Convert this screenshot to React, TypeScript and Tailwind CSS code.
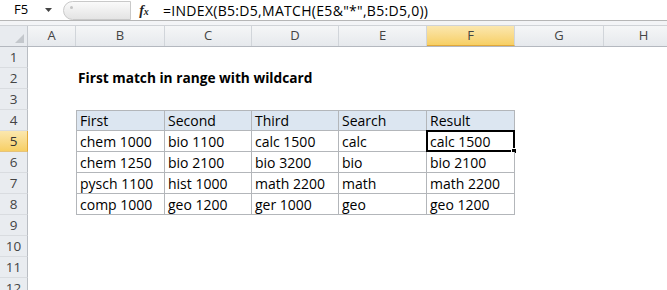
import React from 'react'

const cols = ['A', 'B', 'C', 'D', 'E', 'F', 'G', 'H']
const colW = ['w-[48px]', 'w-[89px]', 'w-[87px]', 'w-[87px]', 'w-[88px]', 'w-[88px]', 'w-[89px]', 'w-[80px]']

const table = [
  ['First', 'Second', 'Third', 'Search', 'Result'],
  ['chem 1000', 'bio 1100', 'calc 1500', 'calc', 'calc 1500'],
  ['chem 1250', 'bio 2100', 'bio 3200', 'bio', 'bio 2100'],
  ['pysch 1100', 'hist 1000', 'math 2200', 'math', 'math 2200'],
  ['comp 1000', 'geo 1200', 'ger 1000', 'geo', 'geo 1200'],
]

const font = { fontFamily: '"Open Sans", "Noto Sans", sans-serif' }

function FormulaBar() {
  return (
    <div className="flex items-center h-[21px] bg-white border-b border-[#b6b6b6]">
      {/* Name box */}
      <div className="flex items-center w-[60px] h-full pl-[14px] text-[13px] text-black">
        <span>F5</span>
        <svg className="ml-auto mr-[8px]" width="7" height="4" viewBox="0 0 7 4">
          <path d="M0 0h7L3.5 4z" fill="#444" />
        </svg>
      </div>
      {/* splitter */}
      <div className="relative ml-[3px] h-[19px] w-[68px] rounded-l-full border border-[#c9c9c9] bg-gradient-to-b from-[#fafafa] to-[#e4e4e4]">
        <div className="absolute left-[6px] top-[4px] w-[3px] h-[3px] rounded-full bg-[#c4c4c4]" />
      </div>
      <div className="w-[26px] flex justify-center text-[14px] text-[#222] italic" style={{ fontFamily: '"Liberation Serif", serif' }}>
        <span className="font-bold">f</span>
        <span className="text-[10px] font-bold mt-[4px]">x</span>
      </div>
      <div className="pl-[6px] text-[14px] text-black tracking-[0.3px]">=INDEX(B5:D5,MATCH(E5&amp;"*",B5:D5,0))</div>
    </div>
  )
}

function ColHeaders() {
  return (
    <div className="flex h-[21px] border-b border-[#b4b8bf] text-[13px] text-[#444]">
      <div className="relative w-[28px] shrink-0 bg-[#e8ebef] border-r border-[#c5c9cf]">
        <svg className="absolute right-[3px] bottom-[3px]" width="9" height="9" viewBox="0 0 9 9">
          <path d="M9 0v9H0z" fill="#c3c7cc" />
        </svg>
      </div>
      {cols.map((c, i) => (
        <div
          key={c}
          className={`${colW[i]} shrink-0 flex items-center justify-center border-r border-[#d1d5da] ${
            c === 'F'
              ? 'bg-gradient-to-b from-[#fbe7ae] to-[#f7cf63] border-b border-b-[#e1a83a]'
              : 'bg-gradient-to-b from-[#f5f6f7] to-[#e6e9ed]'
          }`}
        >
          {c}
        </div>
      ))}
    </div>
  )
}

function Row({ n }: { n: number }) {
  const t = n >= 4 && n <= 8 ? table[n - 4] : null
  return (
    <div className="flex h-[21px]">
      <div
        className={`w-[28px] shrink-0 flex items-center justify-center text-[13.5px] border-r border-b ${
          n === 5
            ? 'bg-gradient-to-b from-[#fbe7ae] to-[#f7cf63] border-r-[#e1a83a] border-b-[#e6c37a] text-[#333]'
            : 'bg-[#e9ecf0] border-r-[#b9bdc3] border-b-[#d9dce0] text-[#444]'
        }`}
      >
        {n}
      </div>
      <div className="w-[48px] shrink-0" />
      {n === 2 && <div className="pl-[2px] flex items-center text-[13.7px] font-bold text-black whitespace-nowrap">First match in range with wildcard</div>}
      {t &&
        t.map((v, i) => (
          <div
            key={i}
            className={`${colW[i + 1]} relative shrink-0 flex items-center pl-[3px] text-[14px] text-black whitespace-nowrap border-r border-b border-[#b3b6ba] ${
              i === 0 ? 'border-l' : ''
            } ${n === 4 ? 'border-t bg-[#dce6f1]' : 'bg-white'}`}
          >
            {v}
            {n === 5 && i === 4 && (
              <div className="absolute left-[-1px] top-[-1px] right-[-1px] bottom-[-1px] border-2 border-black">
                <div className="absolute right-[-4px] bottom-[-4px] w-[6px] h-[6px] bg-black border border-white" />
              </div>
            )}
          </div>
        ))}
    </div>
  )
}

export default function App() {
  return (
    <div className="w-[667px] h-[290px] overflow-hidden bg-white" style={font}>
      <FormulaBar />
      <div className="h-[5px] bg-[#f3f4f6] border-b border-[#d0d3d7]" />
      <ColHeaders />
      {Array.from({ length: 12 }, (_, i) => (
        <Row key={i} n={i + 1} />
      ))}
    </div>
  )
}
